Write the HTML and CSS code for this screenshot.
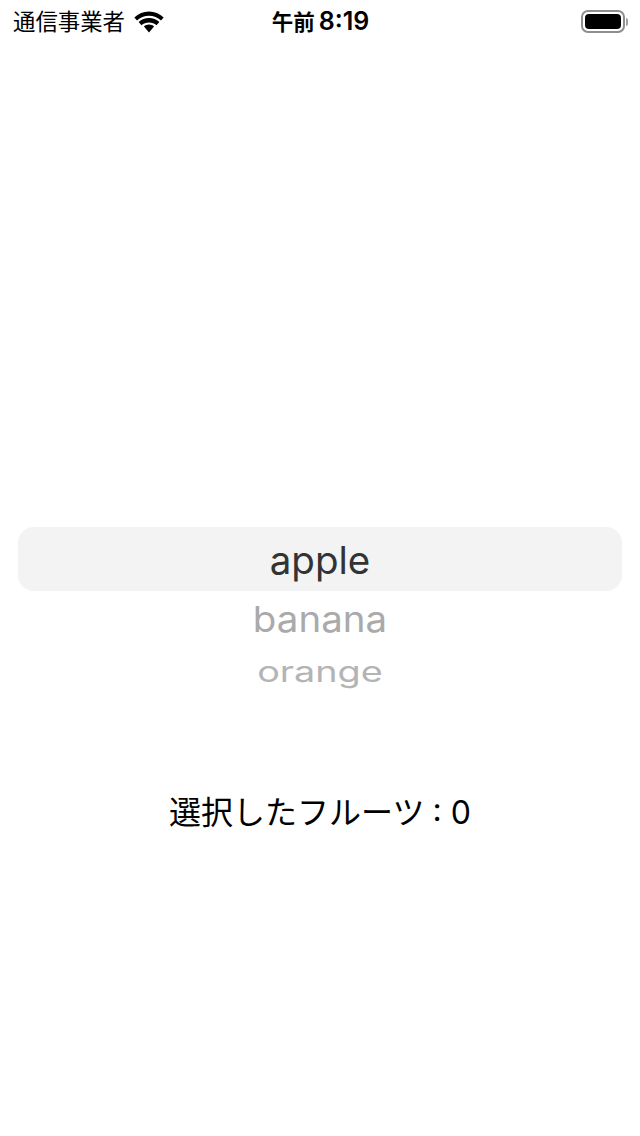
FILE: index.html
```html
<!DOCTYPE html>
<html lang="ja">
<head>
    <meta charset="UTF-8">
    <meta name="viewport" content="width=device-width, initial-scale=1.0">
    <title>フルーツ</title>
    <link rel="stylesheet" href="styles.css">
</head>
<body>
    <div class="statusbar">
        <div class="status-left">
            <span class="carrier">通信事業者</span>
            <svg class="wifi" width="30" height="22" viewBox="2 1.700 26 18.100">
                <path d="M15 5.400c4 0 7.600 1.500 10.400 4l2.300-2.600C24.300 3.600 19.800 1.700 15 1.700S5.700 3.600 2.300 6.800l2.300 2.600c2.800-2.500 6.400-4 10.400-4z"/>
                <path d="M15 11.200c2.500 0 4.700 .9 6.500 2.400l2.500-2.800C21.500 8.600 18.400 7.300 15 7.300S8.500 8.600 6 10.800l2.500 2.800c1.800-1.500 4-2.400 6.500-2.400z"/>
                <path d="M15 13c-1.700 0-3.200 .6-4.400 1.600L15 19.800l4.400-5.200C18.200 13.600 16.700 13 15 13z"/>
            </svg>
        </div>
        <div class="clock">午前<span class="clock-time">8:19</span></div>
        <div class="status-right">
            <div class="battery"><div class="battery-level"></div></div>
            <div class="battery-cap"></div>
        </div>
    </div>

    <div class="picker">
        <div class="picker-row selected">apple</div>
        <div class="picker-row second">banana</div>
        <div class="picker-row third">orange</div>
    </div>

    <p class="result">選択したフルーツ<span class="result-value">: 0</span></p>
</body>
</html>
```

FILE: styles.css
```css
body {
    background-color: #fff;
    color: #000;
    font-family: Inter, "Noto Sans CJK JP", sans-serif;
    width: 640px;
    height: 1136px;
    margin: 0;
    overflow: hidden;
}
.statusbar {
    display: grid;
    grid-template-columns: 1fr auto 1fr;
    align-items: center;
    height: 42px;
    padding: 0 12px 0 13px;
}
.status-left {
    display: flex;
    align-items: center;
    gap: 9px;
}
.carrier {
    font-size: 22.400px;
    line-height: 42px;
}
.wifi {
    fill: #000;
}
.clock {
    font-size: 21.500px;
    font-weight: 600;
    line-height: 42px;
}
.clock-time {
    margin-left: 4px;
    font-size: 25px;
}
.status-right {
    display: flex;
    justify-content: flex-end;
    align-items: center;
}
.battery {
    box-sizing: border-box;
    width: 44px;
    height: 23px;
    padding: 2px;
    border: 2px solid #8e8e8e;
    border-radius: 7px;
}
.battery-level {
    height: 100%;
    background-color: #000;
    border-radius: 4px;
}
.battery-cap {
    width: 2px;
    height: 8px;
    margin-left: 1px;
    background-color: #a0a0a0;
    border-radius: 0 2px 2px 0;
}
.picker {
    margin: 485px 18px 0;
    text-align: center;
}
.picker-row.selected {
    height: 64px;
    line-height: 66px;
    background-color: #f3f3f3;
    border-radius: 16px;
    color: #333;
    font-size: 38.500px;
}
.picker-row.second {
    height: 58px;
    line-height: 56px;
    color: #aaa;
    font-size: 38.500px;
    transform: scaleY(.93);
}
.picker-row.third {
    height: 44px;
    line-height: 44px;
    color: #b4b4b4;
    font-size: 37.800px;
    transform: scaleY(.76);
}
.result {
    margin: 98px 0 0;
    text-align: center;
    font-size: 32px;
    line-height: 44px;
}
.result-value {
    margin-left: 8px;
}
```
